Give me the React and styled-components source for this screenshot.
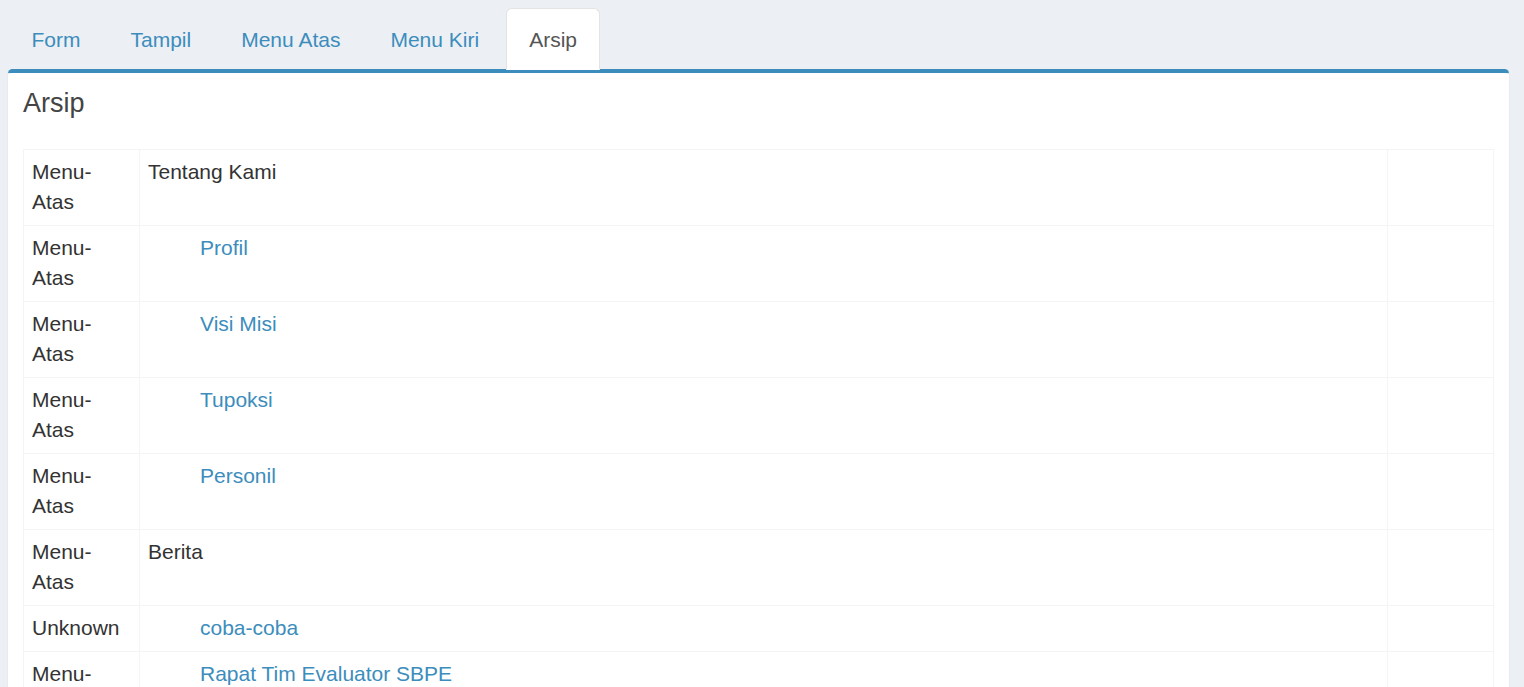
import React from "react";
import styled, { createGlobalStyle } from "styled-components";

const GlobalStyle = createGlobalStyle`
  html, body {
    margin: 0;
    padding: 0;
    background: #ecf0f5;
    font-family: "Liberation Sans", Arial, sans-serif;
    font-size: 21px;
    line-height: 30px;
    color: #333;
  }
  * {
    box-sizing: border-box;
  }
`;

const Page = styled.div`
  padding: 8px 15px 0 8px;
`;

const Tabs = styled.ul`
  display: flex;
  list-style: none;
  margin: 0 0 -1.5px 0;
  padding: 0;
  position: relative;
  z-index: 1;
`;

const TabItem = styled.li`
  margin-right: 3px;
`;

const TabLink = styled.a`
  display: block;
  padding: 16px 22.5px 14px;
  line-height: 30px;
  border: 1.5px solid ${(p) => (p.active ? "#e3e3e3" : "transparent")};
  border-bottom-color: transparent;
  border-radius: 6px 6px 0 0;
  background: ${(p) => (p.active ? "#fff" : "transparent")};
  color: ${(p) => (p.active ? "#555" : "#3c8dbc")};
  text-decoration: none;
  cursor: pointer;
`;

const Box = styled.div`
  background: #fff;
  border-top: 4.5px solid #3c8dbc;
  border-radius: 4.5px;
  box-shadow: 0 1.5px 1.5px rgba(0, 0, 0, 0.1);
  position: relative;
`;

const BoxHeader = styled.div`
  padding: 15px;
`;

const BoxTitle = styled.h3`
  margin: 0;
  font-size: 27px;
  font-weight: 400;
  line-height: 30px;
  color: #444;
`;

const BoxBody = styled.div`
  padding: 16px 15px 15px;
`;

const Table = styled.table`
  width: 100%;
  border-collapse: collapse;
  border: 1px solid #f4f4f4;
`;

const Cell = styled.td`
  border: 1px solid #f4f4f4;
  padding: 7.5px 8px;
  vertical-align: top;
  width: ${(p) => p.width || "auto"};
`;

const Link = styled.a`
  color: #3c8dbc;
  text-decoration: none;
  padding-left: ${(p) => (p.indent ? "52px" : "0")};
`;

const rows = [
  { type: "Menu-Atas", title: "Tentang Kami", child: false },
  { type: "Menu-Atas", title: "Profil", child: true },
  { type: "Menu-Atas", title: "Visi Misi", child: true },
  { type: "Menu-Atas", title: "Tupoksi", child: true },
  { type: "Menu-Atas", title: "Personil", child: true },
  { type: "Menu-Atas", title: "Berita", child: false },
  { type: "Unknown", title: "coba-coba", child: true },
  { type: "Menu-Atas", title: "Rapat Tim Evaluator SBPE", child: true },
  { type: "Menu-Atas", title: "Sosialisasi", child: true },
];

const tabs = ["Form", "Tampil", "Menu Atas", "Menu Kiri", "Arsip"];

export default function App() {
  return (
    <Page>
      <GlobalStyle />
      <Tabs>
        {tabs.map((t) => (
          <TabItem key={t}>
            <TabLink active={t === "Arsip"}>{t}</TabLink>
          </TabItem>
        ))}
      </Tabs>
      <Box>
        <BoxHeader>
          <BoxTitle>Arsip</BoxTitle>
        </BoxHeader>
        <BoxBody>
          <Table>
            <tbody>
              {rows.map((r, i) => (
                <tr key={i}>
                  <Cell width="116px">
                    {r.type === "Menu-Atas" ? (
                      <>
                        Menu-
                        <br />
                        Atas
                      </>
                    ) : (
                      r.type
                    )}
                  </Cell>
                  <Cell>
                    {r.child ? <Link indent>{r.title}</Link> : r.title}
                  </Cell>
                  <Cell width="106px" />
                </tr>
              ))}
            </tbody>
          </Table>
        </BoxBody>
      </Box>
    </Page>
  );
}
